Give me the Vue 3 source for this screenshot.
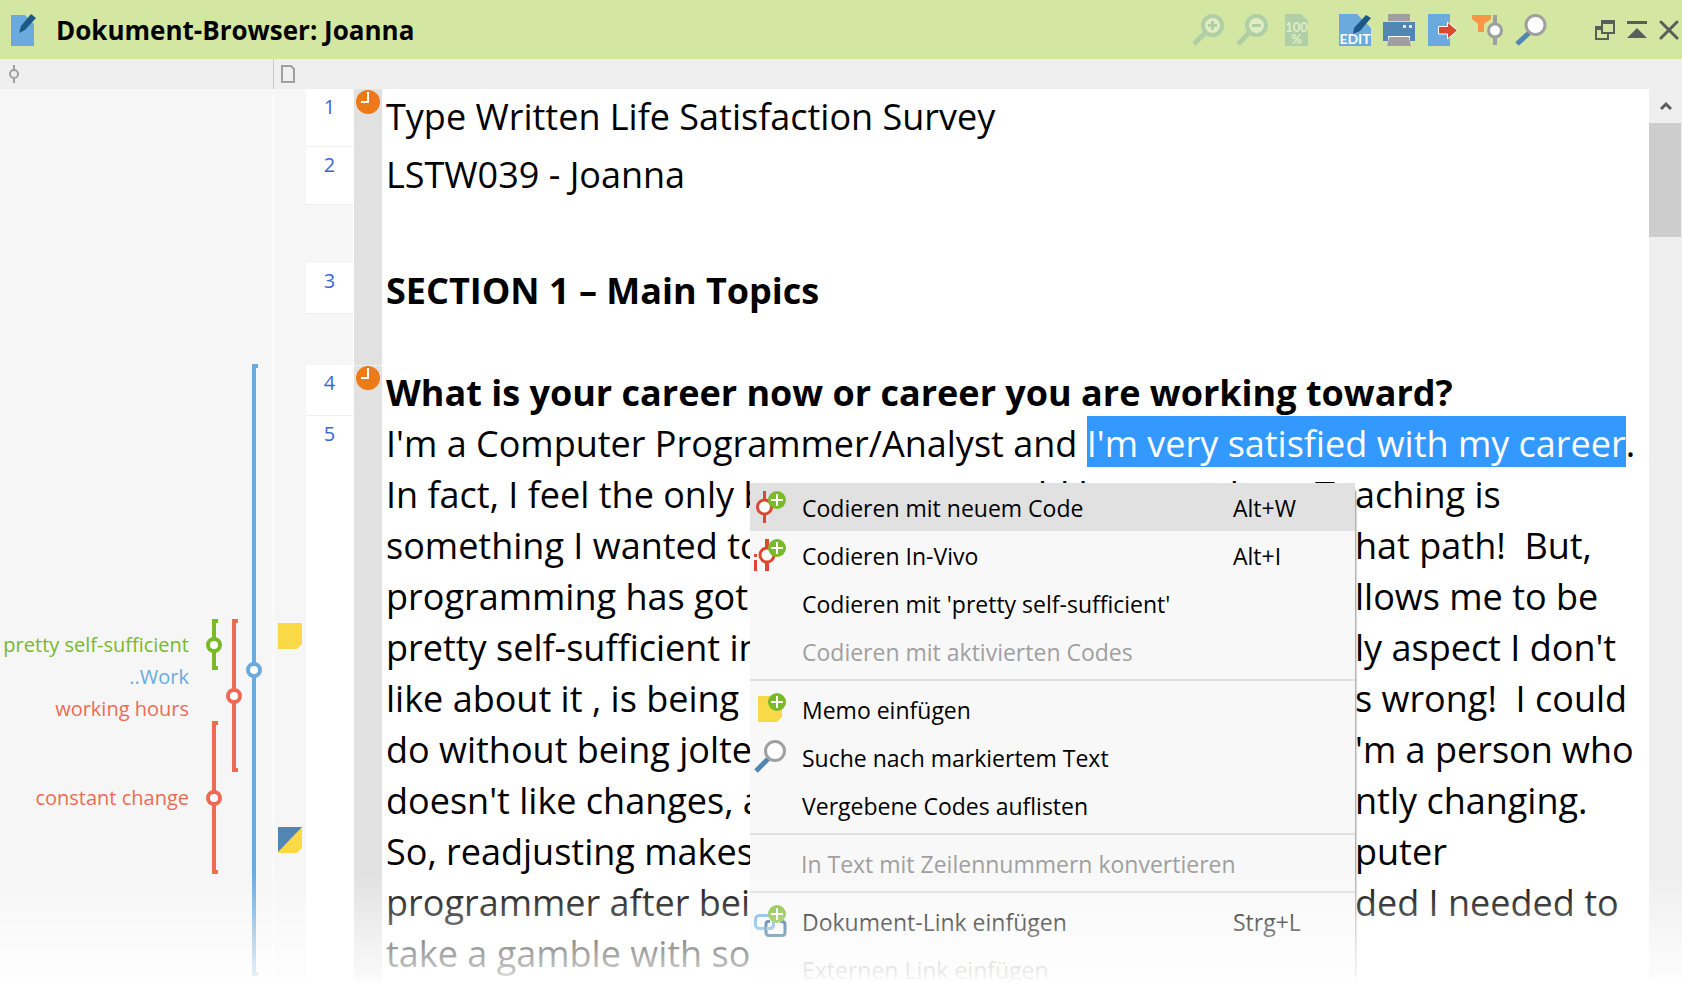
<script setup>
const rows = [
  { num: '1', tall: true, clock: true, lines: [{ start: 'Type Written Life Satisfaction Survey' }] },
  { num: '2', tall: true, lines: [{ start: 'LSTW039 - Joanna' }] },
  { tall: true, lines: [{ start: ' ' }] },
  { num: '3', heading: true, lines: [{ start: 'SECTION 1 – Main Topics' }] },
  { lines: [{ start: ' ' }] },
  { num: '4', heading: true, clock: true, marked: true, lines: [{ start: 'What is your career now or career you are working toward?' }] },
  {
    num: '5',
    grow: true,
    lines: [
      { start: "I'm a Computer Programmer/Analyst and ", selected: "I'm very satisfied with my career", end: '.' },
      { start: 'In fact, I feel the only b', middle: 'ould be a teacher.  Te', end: 'aching is' },
      { start: 'something I wanted to', middle: 't', end: 'hat path!  But,' },
      { start: 'programming has got', middle: 'a', end: 'llows me to be' },
      { start: 'pretty self-sufficient in', middle: 'on', end: "ly aspect I don't" },
      { start: 'like about it , is being ', middle: 'e', end: 's wrong!  I could' },
      { start: 'do without being jolte', middle: 'I', end: "'m a person who" },
      { start: "doesn't like changes, a", middle: 'a', end: 'ntly changing.' },
      { start: 'So, readjusting makes', middle: 'm', end: 'puter' },
      { start: 'programmer after bein', middle: 'i', end: 'ded I needed to' },
      { start: 'take a gamble with so' },
    ],
  },
]

const codings = [
  { label: 'pretty self-sufficient', color: 'green', x: 206, top: 530, height: 51, knob: 26, labelTop: 541 },
  { label: '..Work', color: 'blue', x: 246, top: 275, height: 612, knob: 306, labelTop: 573 },
  { label: 'working hours', color: 'red', x: 226, top: 530, height: 153, knob: 77, labelTop: 605 },
  { label: 'constant change', color: 'red', x: 206, top: 632, height: 153, knob: 77, labelTop: 694 },
]

const menu = [
  [
    { label: 'Codieren mit neuem Code', keys: 'Alt+W', icon: 'code', active: true },
    { label: 'Codieren In-Vivo', keys: 'Alt+I', icon: 'vivo' },
    { label: "Codieren mit 'pretty self-sufficient'" },
    { label: 'Codieren mit aktivierten Codes', disabled: true },
  ],
  [
    { label: 'Memo einfügen', icon: 'memo' },
    { label: 'Suche nach markiertem Text', icon: 'search' },
    { label: 'Vergebene Codes auflisten' },
  ],
  [{ label: 'In Text mit Zeilennummern konvertieren', disabled: true }],
  [
    { label: 'Dokument-Link einfügen', keys: 'Strg+L', icon: 'link' },
    { label: 'Externen Link einfügen', disabled: true },
  ],
]
</script>

<template>
  <div class="window">
    <header class="titlebar">
      <svg class="doc-icon" width="26" height="32" viewBox="0 0 26 32">
        <path d="M0 1h14l9 9v22H0z" fill="#6aaadd" />
        <path d="M8 19l2-7L20 0l5 4-11 12z" fill="#1d5987" />
      </svg>
      <h1>Dokument-Browser: Joanna</h1>
      <div class="tools">
        <button aria-label="Vergrößern" disabled>
          <svg width="32" height="32" viewBox="0 0 32 32">
            <path d="M1 30L13 18" stroke="#b0cfa7" stroke-width="5" />
            <circle cx="19.500" cy="11.500" r="9.500" fill="#e0edc0" stroke="#b0cfa7" stroke-width="4" />
            <path d="M19.500 7v9M15 11.500h9" stroke="#b0cfa7" stroke-width="3" />
          </svg>
        </button>
        <button aria-label="Verkleinern" disabled>
          <svg width="32" height="32" viewBox="0 0 32 32">
            <path d="M1 30L13 18" stroke="#b0cfa7" stroke-width="5" />
            <circle cx="19.500" cy="11.500" r="9.500" fill="#e0edc0" stroke="#b0cfa7" stroke-width="4" />
            <path d="M15 11.500h9" stroke="#b0cfa7" stroke-width="3" />
          </svg>
        </button>
        <button aria-label="Originalgröße" disabled>
          <svg width="32" height="32" viewBox="0 0 32 32">
            <path d="M4 0h16l7 7v25H4z" fill="#b0cfa7" />
            <text x="15.500" y="18" text-anchor="middle" class="glyph pale">100</text>
            <text x="15.500" y="30" text-anchor="middle" class="glyph pale">%</text>
          </svg>
        </button>
      </div>
      <div class="tools">
        <button aria-label="Bearbeiten">
          <svg width="32" height="32" viewBox="0 0 32 32">
            <path d="M0 0h18l14 14v18H0z" fill="#6aaadd" />
            <path d="M14 20l1-6L27 1l5 3-11 13z" fill="#1d5987" />
            <text x="16" y="30" text-anchor="middle" class="glyph">EDIT</text>
          </svg>
        </button>
        <button aria-label="Drucken">
          <svg width="32" height="32" viewBox="0 0 32 32">
            <path d="M5 0h22v7H5z" fill="#9f9f9f" />
            <path d="M0 8h32v19H0z" fill="#5086b1" />
            <path d="M5 22h22v5l1 5H4l1-5z" fill="#fff" />
            <path d="M6 23h20l2 9H4z" fill="#9f9f9f" />
            <path d="M20 11h3v3h-3zM26 11h3v3h-3z" fill="#dceaf5" />
          </svg>
        </button>
        <button aria-label="Exportieren">
          <svg width="32" height="32" viewBox="0 0 32 32">
            <path d="M1 0h22v32H1z" fill="#6aaadd" />
            <path d="M11.500 12.500h9V8l10 8.500-10 8.500v-5h-9z" fill="#dd4731" stroke="#fff" />
          </svg>
        </button>
        <button aria-label="Codings filtern">
          <svg width="32" height="32" viewBox="0 0 32 32">
            <path d="M1 1h19v4l-7 5v8H7v-8L1 5z" fill="#f79646" />
            <path d="M24 1v30" stroke="#9f9f9f" stroke-width="4" />
            <circle cx="24" cy="16.500" r="6.500" fill="#fff" stroke="#9f9f9f" stroke-width="3" />
          </svg>
        </button>
        <button aria-label="Suchen">
          <svg width="32" height="32" viewBox="0 0 32 32">
            <path d="M2 30L14 19" stroke="#5086b1" stroke-width="5" />
            <circle cx="20.500" cy="11" r="9.500" fill="#fff" stroke="#9f9f9f" stroke-width="3" />
          </svg>
        </button>
      </div>
      <div class="window-tools">
        <button aria-label="Fenster lösen">
          <svg width="20" height="20" viewBox="0 0 20 20" fill="none" stroke="#5a5e59" stroke-width="2">
            <path d="M6 7H1v12h12v-5" />
            <path d="M7 1h12v12H7z" />
            <path d="M6 2h14M0 8h6" stroke-width="4" />
          </svg>
        </button>
        <button aria-label="Einklappen">
          <svg width="20" height="20" viewBox="0 0 20 20" fill="#5a5e59">
            <path d="M0 1h20v3H0zM10 8l10 10H0z" />
          </svg>
        </button>
        <button aria-label="Schließen">
          <svg width="20" height="20" viewBox="0 0 20 20" stroke="#5a5e59" stroke-width="3" stroke-linecap="round">
            <path d="M2 2l16 16M18 2L2 18" />
          </svg>
        </button>
      </div>
    </header>

    <div class="subbar">
      <div class="subbar-codes">
        <svg width="10" height="18" viewBox="0 0 10 18" fill="none" stroke="#9f9f9f" stroke-width="2">
          <path d="M5 0v5M5 13v5" />
          <circle cx="5" cy="9" r="4" />
        </svg>
      </div>
      <div class="subbar-doc">
        <svg width="14" height="18" viewBox="0 0 14 18" fill="none" stroke="#9f9f9f" stroke-width="2">
          <path d="M1 1h9l3 3v13H1z" />
        </svg>
      </div>
    </div>

    <main class="body">
      <aside class="codes">
        <template v-for="c in codings" :key="c.label">
          <span class="stripe" :class="c.color" :style="{ left: c.x + 'px', top: c.top + 'px', height: c.height + 'px' }">
            <i class="knob" :style="{ top: c.knob - 8 + 'px' }"></i>
          </span>
          <span class="code-label" :class="c.color" :style="{ top: c.labelTop + 'px' }">{{ c.label }}</span>
        </template>
      </aside>
      <aside class="memos">
        <svg class="memo memo-first" width="24" height="26" viewBox="0 0 24 26">
          <path d="M0 0h24v21l-5 5H0z" fill="#fad946" />
        </svg>
        <svg class="memo memo-second" width="24" height="26" viewBox="0 0 24 26">
          <path d="M0 0h24v21l-5 5H0z" fill="#fad946" />
          <path d="M0 0h24L0 25z" fill="#5086b1" />
        </svg>
      </aside>

      <section class="document">
        <div v-for="(row, i) in rows" :key="i" class="row" :class="{ tall: row.tall, grow: row.grow }">
          <div class="num" :class="{ filled: row.num }">{{ row.num }}</div>
          <div class="strip" :class="{ marked: row.marked }">
            <svg v-if="row.clock" width="24" height="24" viewBox="0 0 24 24">
              <circle cx="12" cy="12" r="12" fill="#ec7a18" />
              <path d="M12 2v10H5" fill="none" stroke="#fff" stroke-width="2" />
            </svg>
          </div>
          <div class="text" :class="{ heading: row.heading }">
            <p v-for="(line, j) in row.lines" :key="j">
              <span v-if="line.middle" class="lead"><span>{{ line.start }}</span><span>{{ line.middle }}</span></span><span v-else>{{ line.start }}</span><mark v-if="line.selected">{{ line.selected }}</mark><span>{{ line.end }}</span>
            </p>
          </div>
        </div>

        <div class="menu" role="menu">
          <div v-for="(group, g) in menu" :key="g" class="group">
            <button
              v-for="item in group"
              :key="item.label"
              role="menuitem"
              class="item"
              :class="{ active: item.active }"
              :disabled="item.disabled"
            >
              <span class="icon">
                <svg v-if="item.icon" width="36" height="36" viewBox="0 0 36 36">
                  <template v-if="item.icon === 'code'">
                    <path d="M10.500 2v32" stroke="#dd4731" stroke-width="3" />
                    <circle cx="10.500" cy="18" r="7" fill="#fff" stroke="#dd4731" stroke-width="3" />
                  </template>
                  <template v-else-if="item.icon === 'vivo'">
                    <path d="M13 2v32" stroke="#dd4731" stroke-width="4" />
                    <circle cx="13" cy="18" r="7" fill="#fff" stroke="#dd4731" stroke-width="3" />
                    <path d="M0 17h3v3H0zM0 23h3v11H0z" fill="#dd4731" />
                  </template>
                  <path v-else-if="item.icon === 'memo'" d="M4 5h24v21l-5 5H4z" fill="#fad946" />
                  <template v-else-if="item.icon === 'search'">
                    <path d="M2 32L14 20" stroke="#5086b1" stroke-width="5" />
                    <circle cx="21" cy="12" r="9.500" fill="#fff" stroke="#9f9f9f" stroke-width="3" />
                  </template>
                  <g v-else fill="none" stroke-width="3">
                    <rect x="1.500" y="12.500" width="18" height="13" rx="4" stroke="#6aaadd" />
                    <path d="M16 18.500h-2q-2 0-2 3v8q0 3 3 3h13q3 0 3-3v-8q0-3-3-3h-2" stroke="#1d5987" />
                    <path d="M12 25.500h4q3.500 0 3.500-4" stroke="#6aaadd" />
                  </g>
                  <template v-if="item.icon !== 'search'">
                    <circle cx="23" cy="11" r="9" fill="#7ab929" />
                    <path d="M23 5v12M17 11h12" stroke="#fff" stroke-width="2" />
                  </template>
                </svg>
              </span>
              <span class="label">{{ item.label }}</span>
              <span class="keys">{{ item.keys }}</span>
            </button>
          </div>
        </div>
      </section>

      <div class="scrollbar">
        <button aria-label="Nach oben">
          <svg width="12" height="10" viewBox="0 0 12 10" fill="none" stroke="#5a5a5a" stroke-width="3">
            <path d="M1 8l5-5 5 5" />
          </svg>
        </button>
        <div class="thumb"></div>
      </div>
      <div class="fade"></div>
    </main>
  </div>
</template>

<style>
body {
  margin: 0;
  background: #fff;
}
</style>

<style scoped>
.window {
  display: flex;
  flex-direction: column;
  height: 100vh;
  min-height: 600px;
  overflow: hidden;
  font-family: "Open Sans", "Noto Sans", sans-serif;
  color: #000;
}
button {
  display: block;
  padding: 0;
  border: 0;
  background: none;
  font: inherit;
  color: inherit;
}
svg {
  display: block;
}
.titlebar {
  display: flex;
  align-items: center;
  flex: none;
  height: 59px;
  padding: 0 3px 0 11px;
  background: #d3e7a2;
}
h1 {
  flex: 1;
  margin: 0 0 0 19px;
  font-size: 26px;
  line-height: 34px;
  font-weight: 700;
  white-space: nowrap;
}
.tools {
  display: flex;
  gap: 12px;
  margin-left: 26px;
}
.window-tools {
  display: flex;
  gap: 12px;
  margin-left: 48px;
}
.glyph {
  font-family: Lato, "Open Sans", sans-serif;
  font-size: 14px;
  font-weight: 700;
  fill: #fff;
}
.pale {
  font-size: 13px;
  fill: #e0edc0;
}
.subbar {
  display: flex;
  flex: none;
  height: 30px;
  background: #efefef;
}
.subbar-codes {
  display: flex;
  align-items: center;
  width: 264px;
  padding-left: 9px;
  border-right: 1px solid #c8c8c8;
}
.subbar-doc {
  display: flex;
  align-items: center;
  padding-left: 7px;
}
.body {
  position: relative;
  display: flex;
  flex: 1;
  min-height: 0;
}
.codes {
  position: relative;
  flex: none;
  width: 273px;
  border-right: 1px solid #fff;
  background: #f6f6f6;
}
.stripe {
  position: absolute;
  box-sizing: border-box;
  width: 12px;
  margin-left: 6px;
  background:
    linear-gradient(currentColor, currentColor) 0 0 / 4px 100% no-repeat,
    linear-gradient(currentColor, currentColor) 0 0 / 6px 4px no-repeat,
    linear-gradient(currentColor, currentColor) 0 100% / 6px 4px no-repeat;
}
.knob {
  position: absolute;
  left: -6px;
  box-sizing: border-box;
  width: 16px;
  height: 16px;
  border: 4px solid currentColor;
  border-radius: 50%;
  background: #fff;
}
.code-label {
  position: absolute;
  right: 84px;
  font-size: 20px;
  line-height: 30px;
  white-space: nowrap;
}
.green {
  color: #7ab929;
}
.blue {
  color: #6aaadd;
}
.red {
  color: #ef6a55;
}
.memos {
  position: relative;
  flex: none;
  width: 32px;
  background: #f6f6f6;
}
.memo {
  position: absolute;
  left: 4px;
}
.memo-first {
  top: 534px;
}
.memo-second {
  top: 738px;
}
.document {
  position: relative;
  display: flex;
  flex-direction: column;
  flex: 1;
  min-width: 0;
}
.row {
  display: flex;
  flex: none;
}
.grow {
  flex: 1 0 auto;
}
.num {
  box-sizing: border-box;
  width: 48px;
  padding-top: 3px;
  border-right: 1px solid #fff;
  background: #f6f6f6;
  color: #3a66d6;
  font-size: 20px;
  line-height: 30px;
  text-align: center;
}
.filled {
  border-bottom: 1px solid #eee;
  background: #fff;
}
.strip {
  box-sizing: border-box;
  width: 28px;
  padding: 1px 2px;
  background: #e1e1e1;
}
.marked {
  border-top: 1px dashed #fff;
  padding-top: 0;
}
.text {
  flex: 1;
  padding-left: 4px;
  font-size: 36px;
  line-height: 55px;
}
.tall .text {
  padding-bottom: 7px;
}
.heading {
  font-weight: 700;
}
p {
  display: flex;
  height: 51px;
  margin: 0;
  white-space: pre;
}
.lead {
  display: flex;
  justify-content: space-between;
  width: 969px;
}
mark {
  background: #3399ff;
  color: #fff;
}
.menu {
  position: absolute;
  left: 444px;
  top: 394px;
  width: 605px;
  background: #f8f8f8;
  box-shadow: 2px 6px 2px -1px #958f8f;
  font-size: 23px;
}
.group + .group::before {
  content: "";
  display: block;
  height: 2px;
  margin: 4px 0;
  background: #e0e0e0;
}
.item {
  display: flex;
  align-items: center;
  width: 100%;
  height: 48px;
  padding-left: 4px;
  text-align: left;
  white-space: nowrap;
}
.item:disabled {
  color: #a0a0a0;
}
.active {
  background: #e1e1e1;
}
.icon {
  width: 48px;
}
.label {
  flex: 1;
  padding-top: 2px;
}
.keys {
  width: 122px;
  padding-top: 2px;
}
.scrollbar {
  flex: none;
  width: 33px;
  background: #efefef;
}
.scrollbar button {
  display: flex;
  align-items: center;
  justify-content: center;
  width: 33px;
  height: 34px;
}
.thumb {
  width: 32px;
  height: 114px;
  background: #cdcdcd;
}
.fade {
  position: absolute;
  left: 0;
  right: 0;
  bottom: 0;
  height: 125px;
  background: linear-gradient(rgba(255, 255, 255, 0), rgba(255, 255, 255, 0.25) 26%, rgba(255, 255, 255, 0.4) 40%, rgba(255, 255, 255, 0.62) 62%, rgba(255, 255, 255, 0.78) 80%, #fff 90%);
  pointer-events: none;
}
</style>
